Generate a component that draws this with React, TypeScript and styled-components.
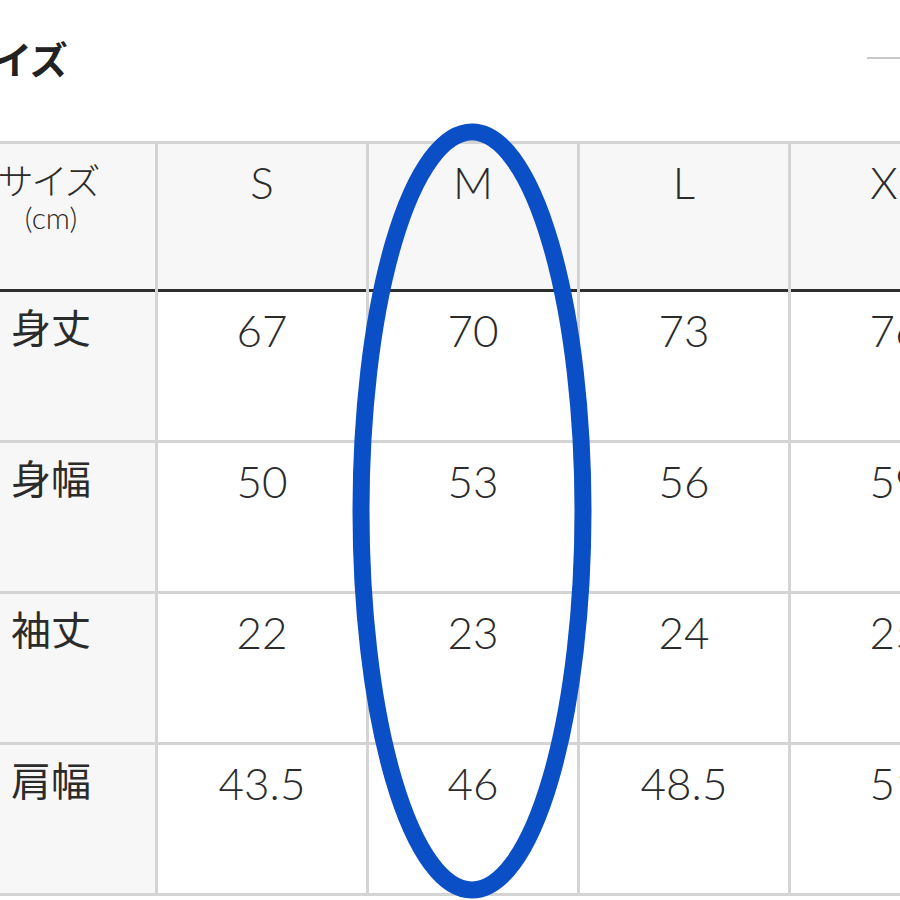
import React from "react";
import styled, { createGlobalStyle } from "styled-components";

const GlobalStyle = createGlobalStyle`
  html, body {
    margin: 0;
    padding: 0;
    background: #ffffff;
    overflow: hidden;
  }
  body {
    font-family: Lato, "Noto Sans CJK JP", sans-serif;
    color: #2b2b2b;
  }
`;

const Page = styled.div`
  width: 900px;
  height: 900px;
  overflow: hidden;
`;

const Sheet = styled.div`
  position: relative;
  margin-left: -53px;
  width: 1300px;
`;

const TitleRow = styled.div`
  display: flex;
  align-items: center;
  justify-content: space-between;
  width: 960px;
  height: 141px;
  box-sizing: border-box;
  padding: 0 0 26px 10px;
`;

const Title = styled.h2`
  margin: 0;
  font-family: "Noto Sans CJK JP", sans-serif;
  font-size: 38px;
  font-weight: 700;
  color: #222;
  letter-spacing: -1px;
`;

const Collapse = styled.span`
  display: block;
  width: 40px;
  height: 2px;
  background: #c9c9c9;
  margin-top: 0;
`;

const Row = styled.div<{ $head?: boolean }>`
  display: grid;
  grid-template-columns: repeat(6, 208px);
  column-gap: 3px;
  background: #d4d4d4;
  padding-top: ${(p) => (p.$head ? "3px" : "0")};
  padding-bottom: ${(p) => (p.$head ? "0" : "3px")};
  width: max-content;
`;

const Cell = styled.div<{ $head?: boolean; $label?: boolean }>`
  box-sizing: border-box;
  height: 148px;
  background: ${(p) => (p.$head || p.$label ? "#f7f7f7" : "#ffffff")};
  border-bottom: ${(p) => (p.$head ? "3px solid #2e2e2e" : "none")};
  text-align: center;
  padding-top: ${(p) => (p.$label ? "10px" : "12px")};
  font-family: ${(p) =>
    p.$label ? '"Noto Sans CJK JP", sans-serif' : 'Lato, "Noto Sans CJK JP", sans-serif'};
  font-size: ${(p) => (p.$label ? "40px" : "44px")};
  font-weight: ${(p) => (p.$label ? 400 : 300)};
  line-height: 1.2;
  color: #2b2b2b;
`;

const HeadLabel = styled.div`
  padding-top: 2px;
  font-family: "Noto Sans CJK JP", sans-serif;
  font-size: 36px;
  line-height: 42px;
  color: #2b2b2b;
  letter-spacing: -2px;
  margin-left: -6px;
`;

const Unit = styled.div`
  font-family: Lato, sans-serif;
  font-size: 30px;
  font-weight: 300;
  line-height: 34px;
  color: #2b2b2b;
`;

const Marker = styled.svg`
  position: absolute;
  left: 0;
  top: 0;
  pointer-events: none;
`;

const sizes = ["S", "M", "L", "XL", "XXL"];
const rows: { label: string; values: string[] }[] = [
  { label: "身丈", values: ["67", "70", "73", "76", "79"] },
  { label: "身幅", values: ["50", "53", "56", "59", "62"] },
  { label: "袖丈", values: ["22", "23", "24", "25", "26"] },
  { label: "肩幅", values: ["43.5", "46", "48.5", "51", "53.5"] },
];

export default function App() {
  return (
    <>
      <GlobalStyle />
      <Page>
        <Sheet>
          <TitleRow>
            <Title>サイズ</Title>
            <Collapse />
          </TitleRow>
          <Row $head>
            <Cell $head>
              <HeadLabel>サイズ</HeadLabel>
              <Unit>(cm)</Unit>
            </Cell>
            {sizes.map((s) => (
              <Cell $head key={s}>
                {s}
              </Cell>
            ))}
          </Row>
          {rows.map((r) => (
            <Row key={r.label}>
              <Cell $label>{r.label}</Cell>
              {r.values.map((v, i) => (
                <Cell key={i}>{v}</Cell>
              ))}
            </Row>
          ))}
          <Marker width="960" height="900" viewBox="0 0 960 900">
            <ellipse
              cx="525"
              cy="511"
              rx="111"
              ry="379"
              fill="none"
              stroke="#0b4fc6"
              strokeWidth="17"
            />
          </Marker>
        </Sheet>
      </Page>
    </>
  );
}
